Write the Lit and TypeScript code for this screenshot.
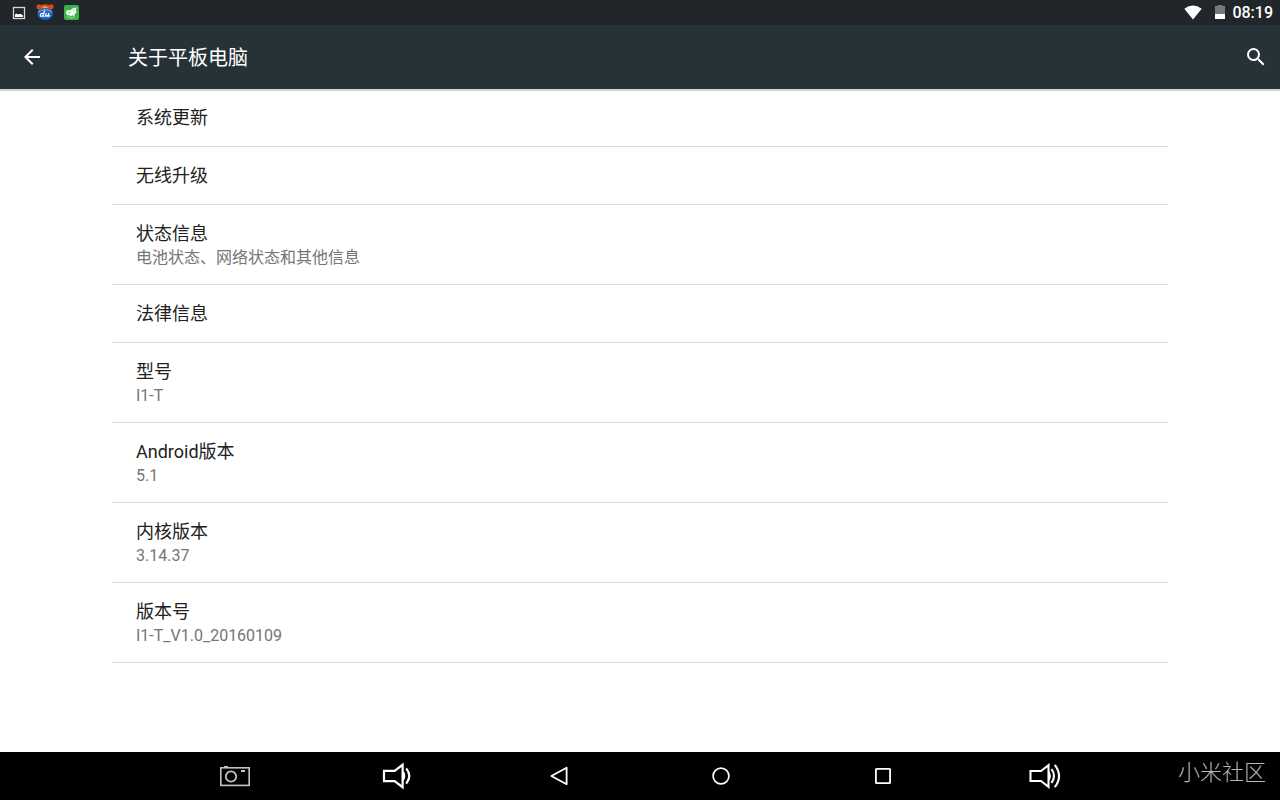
import { LitElement, html, css, svg, TemplateResult } from "lit";
import { customElement } from "lit/decorators.js";

interface Preference {
  title: string;
  summary?: string;
}

const PREFERENCES: Preference[] = [
  { title: "系统更新" },
  { title: "无线升级" },
  { title: "状态信息", summary: "电池状态、网络状态和其他信息" },
  { title: "法律信息" },
  { title: "型号", summary: "I1-T" },
  { title: "Android版本", summary: "5.1" },
  { title: "内核版本", summary: "3.14.37" },
  { title: "版本号", summary: "I1-T_V1.0_20160109" },
];

const NAV_KEYS: { label: string; icon: TemplateResult }[] = [
  {
    label: "截屏",
    icon: svg`<g stroke="#c4c4c4" stroke-width="1.6">
      <rect x="5.8" y="11.8" width="28.4" height="17.6"/>
      <circle cx="16" cy="20.5" r="5.2" stroke-width="1.8"/>
      <path d="M9 10.7h4" stroke-width="1.4"/>
      <path d="M26 15h4" stroke-width="2"/>
    </g>`,
  },
  {
    label: "音量减",
    icon: svg`<path d="M7 14.8h10.6L25.6 8.800v22.400l-8-6H7z" stroke-width="2.2"/>
      <path d="M25.6 13.500q5.500 6.500 0 13z" fill="#fff" stroke="none"/>
      <path d="M29.2 12.400q6.200 7.600 0 15.200" stroke-width="2.200"/>`,
  },
  {
    label: "返回",
    icon: svg`<path d="M12.4 20 27.6 11.8v16.4z" stroke-width="1.8" stroke-linejoin="round"/>`,
  },
  {
    label: "主屏幕",
    icon: svg`<circle cx="20" cy="20" r="7.9" stroke-width="1.7"/>`,
  },
  {
    label: "最近任务",
    icon: svg`<rect x="12.9" y="12.9" width="14.2" height="14.2" rx=".6" stroke-width="1.8"/>`,
  },
  {
    label: "音量加",
    icon: svg`<path d="M5.500 15h10.500L23.500 9.200v21.600L16 25H5.500z" stroke-width="2.100"/>
      <path d="M23.500 14.500q5 5.500 0 11z" fill="#fff" stroke="none"/>
      <path d="M26.500 13q5 7 0 14M29.800 8.800q8.500 11.200 0 22.400" stroke-width="2.100"/>`,
  },
];

@customElement("app-root")
export class AppRoot extends LitElement {
  static styles = css`
    :host {
      display: flex;
      flex-direction: column;
      min-height: 100vh;
      background: #fff;
      color: #212121;
      font-family: Roboto, "Noto Sans CJK SC", sans-serif;
    }
    svg {
      display: block;
      fill: none;
    }
    button {
      display: grid;
      place-items: center;
      margin: 0;
      padding: 0;
      border: 0;
      background: none;
      color: #fff;
    }
    .status {
      display: flex;
      align-items: center;
      justify-content: space-between;
      height: 25px;
      padding: 0 7px 0 10px;
      background: #202629;
      color: #fff;
    }
    .notices,
    .system {
      display: flex;
      align-items: center;
    }
    .notices {
      gap: 8px;
    }
    .system {
      gap: 6px;
    }
    .clock {
      font-size: 16px;
      line-height: 25px;
      font-weight: 500;
    }
    .bar {
      display: flex;
      align-items: center;
      height: 64px;
      background: #263238;
      color: #fff;
      box-shadow: 0 2px 1px rgba(38, 50, 56, 0.2);
    }
    .bar button {
      width: 64px;
      height: 64px;
    }
    .bar h1 {
      flex: 1;
      margin: 0;
      padding: 2px 0 0 64px;
      font-size: 20px;
      line-height: 28px;
      font-weight: 400;
    }
    .bar .search {
      width: 48px;
    }
    main {
      flex: 1;
      padding: 0 112px;
    }
    .list {
      margin: 0;
      padding: 0;
      list-style: none;
    }
    .item {
      padding: 17px 24px 14px;
      border-bottom: 1px solid #dadada;
    }
    .item.single {
      padding-bottom: 16px;
    }
    .title,
    .summary {
      margin: 0;
      line-height: 24px;
      font-weight: 400;
    }
    .title {
      font-size: 18px;
    }
    .summary {
      font-size: 16px;
      color: #757575;
    }
    .nav {
      position: relative;
      display: flex;
      justify-content: center;
      height: 48px;
      background: #000;
    }
    .keys {
      display: flex;
      width: 76%;
    }
    .keys button {
      flex: 1;
    }
    .mark {
      position: absolute;
      right: 14px;
      top: 5px;
      color: #b8b8b8;
      font-size: 22px;
      line-height: 32px;
      font-weight: 300;
    }
  `;

  render() {
    return html`
      <header class="status">
        <div class="notices">
          <svg width="18" height="19" viewBox="0 0 18 19">
            <rect x="3.500" y="4.500" width="11" height="11" stroke="#d8d8d8" stroke-width="1.300"/>
            <path d="M5 14v-2.500l1.500-1 1.500 1 1-.5h2l2 1.500V14z" fill="#fff"/>
          </svg>
          <svg width="18" height="19" viewBox="0 0 18 19">
            <circle cx="3" cy="3.800" r="2.600" fill="#cf4a20"/>
            <circle cx="15" cy="3.800" r="2.600" fill="#cf4a20"/>
            <path d="M3 5.500Q4 1.200 9 1.200t6 4.300l1 4H2z" fill="#c94b22"/>
            <path d="M5.500 4.700 9 2.700l3.500 2L9 6.200z" fill="#e9a13c"/>
            <ellipse cx="9.200" cy="11" rx="7.700" ry="6" fill="#1c63c4"/>
            <path d="M2 9.200q7-5 14.400 0" stroke="#7ab8ef" stroke-width="1"/>
            <path d="M7.800 10.500q-3-.7-3.400 1.500-.1 2 2.400.9L8.800 7.600M8 12.800q-.4.900.700.600M10.300 10.100l-.8 2.500q.3 1.300 2.700-.2l.7-2.300-.8 2.800q.500.900 1.800-.5" stroke="#fff" stroke-width="1.300"/>
          </svg>
          <svg width="18" height="19" viewBox="0 0 18 19">
            <rect x="2" y="2" width="15" height="15" rx="2" fill="#3cb04a"/>
            <path d="M4 8.500q1-1.800 3-1.500l1.200.6Q9.500 5 14.500 4.500L14 7l.5 3-1.500.5q-.3 2.500-1.500 2.500l-1-.8-2 1.300-.8-1.300H5.500Q3.500 11 4 8.500z" fill="#f2fbf2"/>
            <path d="M6.500 10 8.500 9M11 7.500l1.500-.8" stroke="#3cb04a" stroke-width=".8"/>
            <path d="M4.800 13.500q4.200 3 8.400 0" stroke="#9be0a0" stroke-width=".9"/>
          </svg>
        </div>
        <div class="system">
          <svg width="18" height="17" viewBox="0 0 18 17">
            <path d="M.3 4.700Q9-1.700 17.700 4.700L9 15.500z" fill="#fff"/>
          </svg>
          <svg width="18" height="17" viewBox="0 0 18 17">
            <path d="M7 2h2.500V1h5v1H17v8H7z" fill="#77797a"/>
            <path d="M7 10h10v5H7z" fill="#fff"/>
          </svg>
          <time class="clock">08:19</time>
        </div>
      </header>
      <div class="bar">
        <button aria-label="返回上一级">
          <svg width="24" height="24" viewBox="0 0 24 24">
            <path d="M20 11H7.830l5.590-5.590L12 4l-8 8 8 8 1.410-1.410L7.830 13H20z" fill="#fff"/>
          </svg>
        </button>
        <h1>关于平板电脑</h1>
        <button class="search" aria-label="搜索">
          <svg width="24" height="24" viewBox="0 0 24 24">
            <path fill="#fff" d="M15.500 14h-.79l-.28-.27A6.471 6.471 0 0 0 16 9.500 6.500 6.500 0 1 0 9.500 16c1.610 0 3.090-.59 4.230-1.570l.27.280v.79l5 4.990L20.490 19l-4.990-5zm-6 0C7.010 14 5 11.990 5 9.500S7.010 5 9.500 5 14 7.010 14 9.500 11.990 14 9.500 14z"/>
          </svg>
        </button>
      </div>
      <main>
        <ul class="list">
          ${PREFERENCES.map(
            (p) => html`<li class="item ${p.summary ? "" : "single"}">
              <h2 class="title">${p.title}</h2>
              ${p.summary ? html`<p class="summary">${p.summary}</p>` : ""}
            </li>`
          )}
        </ul>
      </main>
      <nav class="nav">
        <div class="keys">
          ${NAV_KEYS.map(
            (k) => html`<button aria-label=${k.label}>
              <svg width="40" height="40" viewBox="0 0 40 40" stroke="#fff">${k.icon}</svg>
            </button>`
          )}
        </div>
        <span class="mark">小米社区</span>
      </nav>
    `;
  }
}
